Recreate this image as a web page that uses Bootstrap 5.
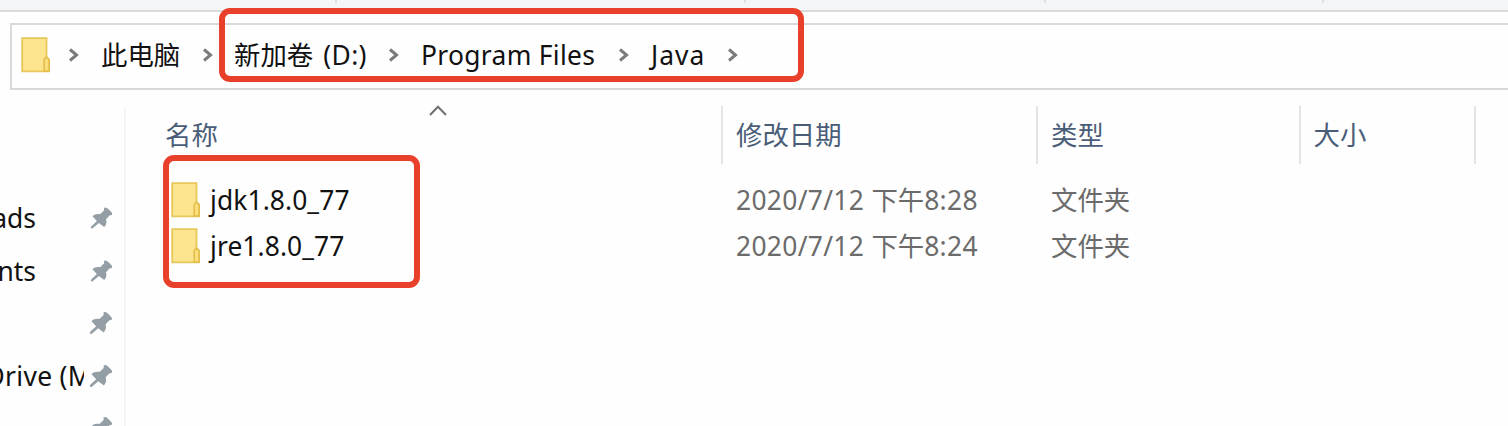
<!DOCTYPE html>
<html lang="zh-CN">
<head>
<meta charset="utf-8">
<meta name="viewport" content="width=device-width, initial-scale=1">
<title>Java</title>
<link href="https://cdn.jsdelivr.net/npm/bootstrap@5.3.0/dist/css/bootstrap.min.css" rel="stylesheet">
<style>
  body { font-family: "Noto Sans", "Noto Sans CJK SC", sans-serif; font-size: 26.4px; line-height: 36px; color: #111; background: #fefefe; height: 426px; }
  .latin { letter-spacing: .32px; }
  .ribbon { height: 12px; background: #f4f5f7; border-bottom: 2px solid #dadbdc; display: grid; grid-template-columns: 337px 409px 300px 278px; }
  .ribbon span { height: 3px; border-right: 2px solid #dfe0e2; }
  .address { margin: 11px 0 0 10px; height: 67px; border: 2px solid #d9d9d9; border-right: 0; padding: 0 0 3px 9px;
    grid-template-columns: 47px 33px 101px 32px 154px 33px 197px 33px 76px 12px; }
  .address .drive { word-spacing: 3px; }
  .address .current { letter-spacing: 1px; }
  .panes { height: 336px; padding-top: 16px; }
  .sidebar { width: 126px; border-right: 2px solid #f5f5f6; padding-top: 86px; }
  .pinned { height: 52.5px; padding-right: 11px; }
  .pinned > span { width: 90px; }
  .pinned .tail { padding-right: 54px; }
  .pinned .clip { width: 85px; margin-right: 5px; }
  .clip > span { margin-left: -14.5px; }
  .cols { grid-template-columns: 597px 315px 262.5px 175px 1fr; }
  .heads { height: 58px; color: #4a5d78; }
  .heads > div { border-right: 2px solid #e3e4e5; padding-top: 11px; }
  .heads > div:nth-child(5) { border: 0; }
  .heads .head-name { padding-left: 39px; }
  .entries { padding-top: 13px; }
  .entry { height: 46px; color: #6b6b6b; }
  .entry .fname { color: #111; padding-left: 45px; letter-spacing: .1px; }
  .fname svg { margin-right: 9px; }
  .cell { padding-left: 13px; }
  .frame { border: 6px solid #e8402a; border-radius: 11px; }
  .frame-path { left: 219px; top: 8px; width: 585px; height: 74px; }
  .frame-list { left: 163px; top: 155px; width: 257px; height: 133px; }
  .sort { left: 303px; top: -1px; }
</style>
</head>
<body class="position-relative overflow-hidden text-nowrap">
<svg class="d-none">
  <symbol id="folder" viewBox="0 0 30 36"><path d="M1.200 1.200H25.500V20.500L28 22.500V34.300H1.200Z" fill="#fde58f" stroke="#e8c75a" stroke-width="1.8"/><path d="M23.200 34V22.500L25.500 20L28 22.500V34Z" fill="#fbdf7d" stroke="#e3bd4b" stroke-width="1.6"/></symbol>
  <symbol id="chev" viewBox="0 0 12 16"><path d="M2 2.500L8.500 8L2 13.500" fill="none" stroke="#7b7b7b" stroke-width="3"/></symbol>
  <symbol id="pin" viewBox="0 0 24 24"><path d="M14.6 1.5C16 .4 17.5 1 19 2.500L22 5.500C23.500 7 23.500 8 22.500 9L20.600 9.200L16.700 13.200C17.600 16.500 17 19 14.800 21.500L9.300 17.200L2.500 23L.8 22.700L1 21L7.200 15.200L2.500 10.300C4.500 8 7.500 7.500 10.500 8L14.800 4Z" fill="#949ea5"/></symbol>
</svg>

<div class="ribbon"><span></span><span></span><span></span><span></span></div>

<nav class="address d-grid align-items-center">
  <svg width="30" height="36"><use href="#folder"/></svg>
  <svg width="12" height="16"><use href="#chev"/></svg>
  <span>此电脑</span>
  <svg width="12" height="16"><use href="#chev"/></svg>
  <span class="drive">新加卷<span class="latin"> (D:)</span></span>
  <svg width="12" height="16"><use href="#chev"/></svg>
  <span class="latin">Program Files</span>
  <svg width="12" height="16"><use href="#chev"/></svg>
  <span class="current">Java</span>
  <svg width="12" height="16"><use href="#chev"/></svg>
</nav>

<div class="panes d-flex overflow-hidden">
  <aside class="sidebar flex-shrink-0">
    <div class="pinned d-flex align-items-center"><span class="tail d-flex justify-content-end"><span>Downloads</span></span><svg width="24" height="24"><use href="#pin"/></svg></div>
    <div class="pinned d-flex align-items-center"><span class="tail d-flex justify-content-end"><span>Documents</span></span><svg width="24" height="24"><use href="#pin"/></svg></div>
    <div class="pinned d-flex align-items-center"><span></span><svg width="24" height="24"><use href="#pin"/></svg></div>
    <div class="pinned d-flex align-items-center"><span class="clip overflow-hidden d-flex"><span class="latin">Drive (M</span></span><svg class="flex-shrink-0" width="24" height="24"><use href="#pin"/></svg></div>
    <div class="pinned d-flex align-items-center"><span></span><svg width="24" height="24"><use href="#pin"/></svg></div>
  </aside>
  <main class="flex-grow-1">
    <div class="heads cols d-grid position-relative">
      <div class="head-name">名称</div>
      <div class="cell">修改日期</div>
      <div class="cell">类型</div>
      <div class="cell">大小</div>
      <div></div>
      <svg class="sort position-absolute" width="18" height="11" viewBox="0 0 18 11"><path d="M1 10L9 1.800L17 10" fill="none" stroke="#707070" stroke-width="2"/></svg>
    </div>
    <div class="entries">
      <div class="entry cols d-grid align-items-center">
        <div class="fname d-flex align-items-center"><svg width="30" height="36"><use href="#folder"/></svg>jdk1.8.0_77</div>
        <div class="cell"><span class="latin">2020/7/12 </span>下午<span class="latin">8:28</span></div>
        <div class="cell">文件夹</div>
      </div>
      <div class="entry cols d-grid align-items-center">
        <div class="fname d-flex align-items-center"><svg width="30" height="36"><use href="#folder"/></svg>jre1.8.0_77</div>
        <div class="cell"><span class="latin">2020/7/12 </span>下午<span class="latin">8:24</span></div>
        <div class="cell">文件夹</div>
      </div>
    </div>
  </main>
</div>

<div class="frame frame-path position-absolute"></div>
<div class="frame frame-list position-absolute"></div>
<script src="https://cdn.jsdelivr.net/npm/bootstrap@5.3.0/dist/js/bootstrap.bundle.min.js"></script>
</body>
</html>
